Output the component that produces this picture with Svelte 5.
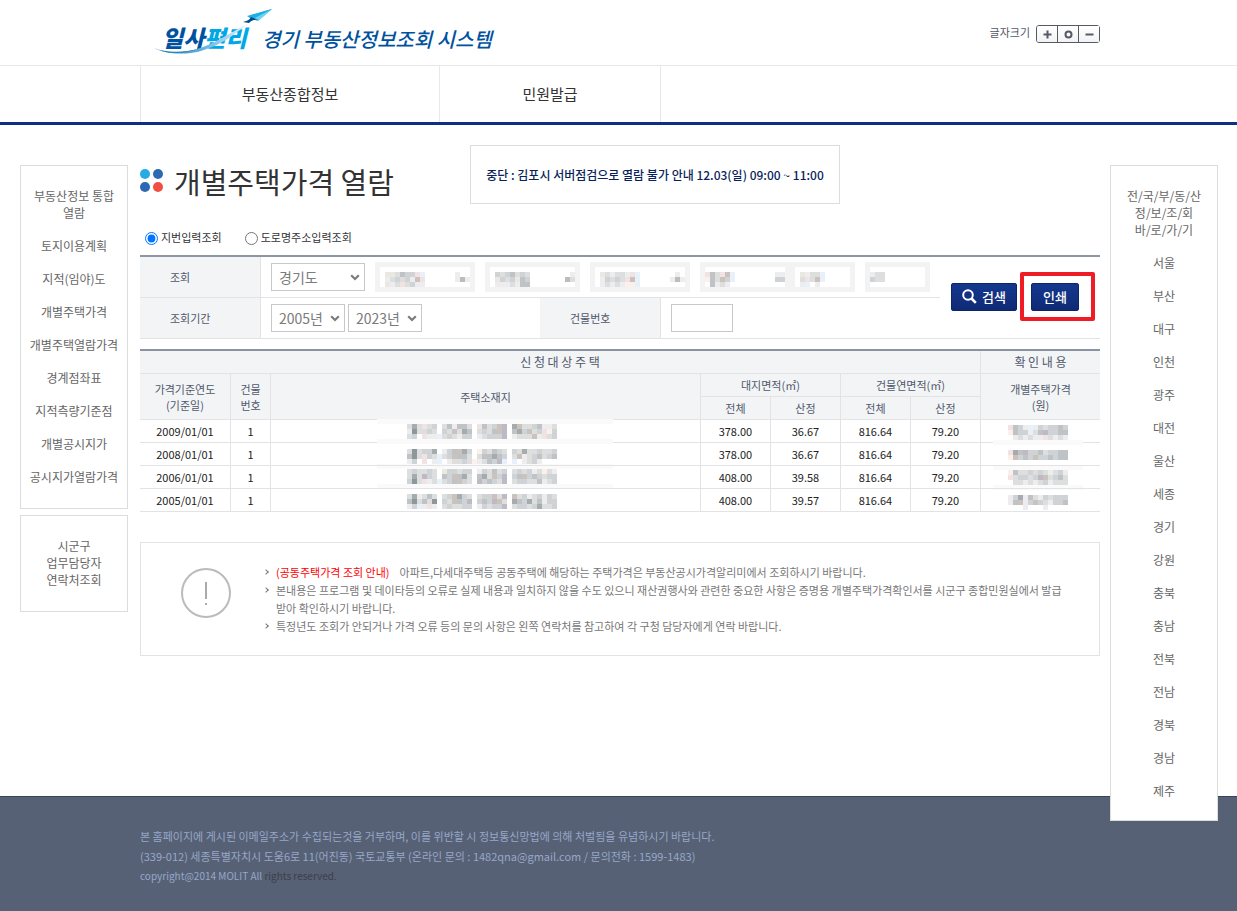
<script>
  const services = [
    '부동산정보 통합 열람', '토지이용계획', '지적(임야)도', '개별주택가격', '개별주택열람가격',
    '경계점좌표', '지적측량기준점', '개별공시지가', '공시지가열람가격'
  ];
  const regions = [
    '서울', '부산', '대구', '인천', '광주', '대전', '울산', '세종', '경기',
    '강원', '충북', '충남', '전북', '전남', '경북', '경남', '제주'
  ];
  const rows = [
    ['2009/01/01', '378.00', '36.67', '816.64', '79.20'],
    ['2008/01/01', '378.00', '36.67', '816.64', '79.20'],
    ['2006/01/01', '408.00', '39.58', '816.64', '79.20'],
    ['2005/01/01', '408.00', '39.57', '816.64', '79.20']
  ];

  // Masked values are drawn as 5px blocks; each letter is one block colour.
  const tones = {
    b: '#ededef', c: '#dddfdf', d: '#d0d3d6', e: '#bfc3c6', f: '#a6abae', g: '#8e979c',
    p: '#f1e3e4', w: '#cbc2be', s: '#e8f1f9', n: '#bdbac5', o: '#fbf1ea', y: '#ebe8e1', k: '#bcbcbc'
  };
  const blocks = (x, y, lines) =>
    lines.flatMap((line, r) =>
      [...line].map((t, c) => ({ x: x + c * 5, y: y + r * 5, fill: tones[t] })).filter((b) => b.fill)
    );

  const addressMask = [
    ...blocks(30, 5, ['cfcpcd.cebeec.pecdwn.fwccdebbc', 'bgccdc.dcwcfe.cdcewn.efdwcdpod', 'cd.pbbscdcbdd.bcdddn.bcccwbpcd']),
    ...blocks(30, 30, ['cgcddf.bdewfd.odcedc.dcfccdccd', 'egcpdcscdweec.ceefed.cwbcdecde', 'bd.p.bs.bccdcobcedns.s.bcdb...']),
    ...blocks(30, 50, ['cdccdc.yddcdd.bdcecd.cdcdbcocb', 'cfcndc.edwefc.efcwdn.dewdedcdd', 'dgcpbcscdewdc.ndedcn.cddccebcd']),
    ...blocks(30, 75, ['cfbcec.cdwfdc.cddwcn.wcdbcdbdc', 'egcecg.dcwedn.dednwc.fedfcebdd', 'bdsbpb.cdccdd.bdcddn.cddcdfccd'])
  ];
  const priceMask = [
    ...blocks(15, 5, ['pedbsbdcdded', 'oeddscenddee', '.bcbcbbpcbcb']),
    ...blocks(15, 30, ['pfenddecddee', 'owdedwddedee']),
    ...blocks(15, 50, ['oeccdcdcbcdb', 'pcddcdnwcdec', '.ccbcbcdbccc']),
    ...blocks(15, 75, ['bdfbecbdcddd', 'bewbdwdcbdde', '...b...b....'])
  ];
  const fieldMasks = [
    { name: '시군구', width: 100, cells: [...blocks(5, 5, ['yyceddps', 'bcdcdbwp', 'ybcpcdbb']), ...blocks(75, 5, ['b', 'bkb'])] },
    { name: '읍면동', width: 95, cells: [...blocks(5, 5, ['dcdecdc', 'ydcdyed', 'bbbcbee']), ...blocks(75, 5, ['.b', 'kcb'])] },
    { name: '리', width: 100, cells: [...blocks(5, 5, ['ycbccbps', 'bdcdcpws', 'bcbcboos']), ...blocks(75, 5, ['.b', 'bkb'])] }
  ];
  const lotMasks = [
    { name: '구분', width: 90, cells: [...blocks(0, 5, ['pecpws', 'oecwds', '.ebcb']), ...blocks(70, 5, ['bb', 'dd'])] },
    { name: '본번', width: 65, cells: blocks(5, 5, ['ybccs', 'cpcws', 'bs.b']) }
  ];
  const subMask = { name: '부번', width: 65, cells: blocks(0, 5, ['bcc', 'dcc']) };

  let mode = $state('jibun');
</script>

{#snippet mask(m)}
  <span class="mask" style:width="{m.width}px" role="img" aria-label={m.name}>
    <svg width={m.width - 10} height="20" shape-rendering="crispEdges">
      {#each m.cells as c}<rect x={c.x} y={c.y} width="5" height="5" fill={c.fill} />{/each}
    </svg>
  </span>
{/snippet}

{#snippet chevron()}
  <svg class="chevron" width="10" height="7" viewBox="0 0 10 7"><path d="M1.2 1.3 5 5 8.8 1.3" fill="none" stroke="#7b7b7b" stroke-width="2.2" /></svg>
{/snippet}

<header>
  <div class="top">
    <a class="logo" href="#home" aria-label="일사편리 경기 부동산정보조회 시스템">
      <svg width="350" height="50" viewBox="0 0 350 50">
        <defs>
          <linearGradient id="wing" x1="0" y1="1" x2="1" y2="0">
            <stop offset="0" stop-color="#7fdcf5" /><stop offset="1" stop-color="#0098d8" />
          </linearGradient>
          <linearGradient id="trail" x1="0" y1="0" x2="1" y2="0">
            <stop offset="0" stop-color="#2a7fc0" /><stop offset=".5" stop-color="#5fb0dd" /><stop offset="1" stop-color="#e4f6fd" />
          </linearGradient>
        </defs>
        <text x="9" y="39" class="brand"><tspan fill="#00529f">일사</tspan><tspan fill="#00a8e6">편리</tspan></text>
        <path d="M1 40C13 46 33 46 50 39 67 33 77 24 95 16 80 27 70 36 51 42 33 48 12 46 1 40Z" fill="url(#trail)" />
        <path d="M1 40C13 45 30 45 46 40.500 30 47 12 46 1 40Z" fill="#2a7fc0" />
        <path d="M98 7 119 1 105 13 98 11Z" fill="url(#wing)" />
        <path d="M119 1 94 8 100 12Z" fill="#1fb0e2" />
        <path d="M119 1 100 11 105 13Z" fill="#6fd4f2" />
        <path d="M90 14C95 13 97 11 98 9L106 12C101 11 98 13 96 15Z" fill="#00478f" />
        <text x="109" y="39" class="system" fill="#00529f">경기 부동산정보조회 시스템</text>
      </svg>
    </a>
    <div class="sizer">
      <span>글자크기</span>
      <div class="sizes">
        <button type="button" aria-label="크게"><svg width="9" height="9"><path d="M4.5 0.5v8M.5 4.5h8" stroke="#555a66" stroke-width="2" /></svg></button>
        <button type="button" aria-label="기본"><svg width="9" height="9"><circle cx="4.5" cy="4.5" r="3" fill="none" stroke="#555a66" stroke-width="2" /></svg></button>
        <button type="button" aria-label="작게"><svg width="9" height="9"><path d="M.5 4.5h8" stroke="#555a66" stroke-width="2" /></svg></button>
      </div>
    </div>
  </div>
  <nav>
    <a class="wide" href="#info">부동산종합정보</a>
    <a href="#issue">민원발급</a>
  </nav>
</header>

<div class="body">
  <aside class="left">
    <ul class="links">
      {#each services as s}<li><a href="#service">{s}</a></li>{/each}
    </ul>
    <ul class="links">
      <li><a href="#contact">시군구<br />업무담당자<br />연락처조회</a></li>
    </ul>
  </aside>

  <main>
    <h1>
      <svg width="24" height="24" viewBox="0 0 24 24">
        <circle cx="5" cy="5" r="5" fill="#27abe3" /><circle cx="18" cy="5" r="5" fill="#2d69b3" />
        <circle cx="5" cy="18" r="5" fill="#2d69b3" /><circle cx="18" cy="18" r="5" fill="#f04e43" />
      </svg>
      개별주택가격 열람
    </h1>
    <p class="notice">중단 : 김포시 서버점검으로 열람 불가 안내 12.03(일) 09:00 ~ 11:00</p>

    <div class="modes">
      <label><input type="radio" value="jibun" bind:group={mode} />지번입력조회</label>
      <label><input type="radio" value="road" bind:group={mode} />도로명주소입력조회</label>
    </div>

    <form class="search" onsubmit={(e) => e.preventDefault()}>
      <div class="fields">
        <div class="line">
          <label class="name" for="sido">조회</label>
          <div class="value address">
            <span class="pick province"><select id="sido"><option>경기도</option></select>{@render chevron()}</span>
            {#each fieldMasks as m}{@render mask(m)}{/each}
            <span class="lot">{#each lotMasks as m}{@render mask(m)}{/each}</span>
            {@render mask(subMask)}
          </div>
        </div>
        <div class="line split">
          <label class="name" for="from">조회기간</label>
          <div class="value years">
            <span class="pick"><select id="from"><option>2005년</option></select>{@render chevron()}</span>
            <span class="pick"><select aria-label="종료년도"><option>2023년</option></select>{@render chevron()}</span>
          </div>
          <label class="name" for="bldg">건물번호</label>
          <div class="value"><input id="bldg" type="text" /></div>
        </div>
      </div>
      <div class="actions">
        <button type="submit">
          <svg width="15" height="15" viewBox="0 0 15 15"><circle cx="6" cy="6" r="4.8" fill="none" stroke="#fff" stroke-width="2" /><path d="m9.5 9.5 4.3 4.3" stroke="#fff" stroke-width="2.6" /></svg>검색</button>
        <span class="marked"><button type="button">인쇄</button></span>
      </div>
    </form>

    <table>
      <colgroup>
        <col class="c90" /><col class="c40" /><col /><col class="c70" /><col class="c70" /><col class="c70" /><col class="c70" /><col class="c120" />
      </colgroup>
      <thead>
        <tr class="group"><th colspan="7">신 청 대 상 주 택</th><th>확 인 내 용</th></tr>
        <tr>
          <th rowspan="2">가격기준연도<br />(기준일)</th><th rowspan="2">건물<br />번호</th><th rowspan="2">주택소재지</th>
          <th colspan="2">대지면적(㎡)</th><th colspan="2">건물연면적(㎡)</th><th rowspan="2">개별주택가격<br />(원)</th>
        </tr>
        <tr><th class="inner">전체</th><th>산정</th><th>전체</th><th>산정</th></tr>
      </thead>
      <tbody>
        {#each rows as r, i}
          <tr>
            <td>{r[0]}</td><td>1</td>
            <td>
              {#if i === 0}
                <svg class="cover place" width="236" height="91" shape-rendering="crispEdges">
                  <rect width="236" height="91" fill="#fff" />
                  {#each [0, 20, 45, 65] as y}<rect {y} width="236" height="5" fill="#fafafa" />{/each}
                  {#each addressMask as c}<rect x={c.x} y={c.y} width="5" height="5" fill={c.fill} />{/each}
                </svg>
              {/if}
            </td>
            <td>{r[1]}</td><td>{r[2]}</td><td>{r[3]}</td><td>{r[4]}</td>
            <td>
              {#if i === 0}
                <svg class="cover price" width="90" height="91" shape-rendering="crispEdges">
                  <rect y="4" width="90" height="86" fill="#fff" />
                  {#each [20, 45, 65] as y}<rect {y} width="90" height="5" fill="#fafafa" />{/each}
                  {#each priceMask as c}<rect x={c.x} y={c.y} width="5" height="5" fill={c.fill} />{/each}
                </svg>
              {/if}
            </td>
          </tr>
        {/each}
      </tbody>
    </table>

    <section class="guide">
      <svg class="bang" width="50" height="50" viewBox="0 0 50 50">
        <circle cx="25" cy="25" r="24" fill="none" stroke="#bbb" stroke-width="2" />
        <path d="M25 14v17M25 35v2" stroke="#aaa" stroke-width="2" />
      </svg>
      <ul>
        <li><a class="hot" href="#apt">(공동주택가격 조회 안내)</a>아파트,다세대주택등 공동주택에 해당하는 주택가격은 부동산공시가격알리미에서 조회하시기 바랍니다.</li>
        <li>본내용은 프로그램 및 데이타등의 오류로 실제 내용과 일치하지 않을 수도 있으니 재산권행사와 관련한 중요한 사항은 증명용 개별주택가격확인서를 시군구 종합민원실에서 발급<br />받아 확인하시기 바랍니다.</li>
        <li>특정년도 조회가 안되거나 가격 오류 등의 문의 사항은 왼쪽 연락처를 참고하여 각 구청 담당자에게 연락 바랍니다.</li>
      </ul>
    </section>
  </main>

  <aside class="right">
    <ul class="links">
      <li>전/국/부/동/산<br />정/보/조/회<br />바/로/가/기</li>
      {#each regions as r}<li><a href="#region">{r}</a></li>{/each}
    </ul>
  </aside>
</div>

<footer>
  <p>본 홈페이지에 게시된 이메일주소가 수집되는것을 거부하며, 이를 위반할 시 정보통신망법에 의해 처벌됨을 유념하시기 바랍니다.</p>
  <p>(339-012) 세종특별자치시 도움6로 11(어진동) 국토교통부 (온라인 문의 : 1482qna@gmail.com / 문의전화 : 1599-1483)</p>
  <p class="copy">copyright@2014 MOLIT All <span>rights reserved.</span></p>
</footer>

<style>
  :global(body) {
    margin: 0;
    background: #fff;
    font: 11px/18px 'Noto Sans CJK KR', sans-serif;
    color: #333;
  }
  a { color: inherit; text-decoration: none; }
  ul, p, h1 { margin: 0; padding: 0; }
  ul { list-style: none; }
  svg { display: block; }
  button, input, select { font-family: inherit; box-sizing: border-box; }

  header { border-bottom: 3px solid #0e2f86; }
  .top {
    display: flex;
    justify-content: space-between;
    align-items: flex-start;
    padding: 0 137px 0 153px;
    border-bottom: 1px solid #e8e8ea;
    box-sizing: border-box;
    min-height: 66px;
  }
  .logo { padding-top: 8px; }
  .brand { font-size: 23px; font-weight: 900; font-style: italic; }
  .system { font-size: 20px; font-weight: 500; font-style: italic; }
  .sizer { display: flex; gap: 6px; padding-top: 23px; color: #555a66; }
  .sizes { display: flex; border: 1px solid #555a66; border-radius: 3px; height: 18px; margin-top: 2px; box-sizing: border-box; }
  .sizes button {
    width: 21px;
    padding: 0;
    display: grid;
    place-items: center;
    border: 0;
    background: linear-gradient(#fff, #f3f3f5);
    border-radius: 2px;
  }
  .sizes button:first-child { width: 20px; }
  .sizes button + button { border-left: 1px solid #555a66; border-radius: 0; }

  nav { display: flex; padding: 0 137px 0 140px; }
  nav a {
    flex: 0 0 221px;
    box-sizing: border-box;
    border-right: 1px solid #e8e8ea;
    text-align: center;
    font-size: 15px;
    line-height: 56px;
  }
  nav .wide { flex-basis: 300px; border-left: 1px solid #e8e8ea; }

  .body {
    display: grid;
    grid-template-columns: 108px minmax(0, 1fr) 108px;
    padding: 40px 19px 0 20px;
    align-items: start;
  }
  .left { display: grid; gap: 6px; }
  .links {
    display: grid;
    gap: 16px;
    padding: 21px 4px 23px;
    border: 1px solid #dcdcdc;
    background: #fff;
    text-align: center;
    font-size: 12px;
    line-height: 17px;
    color: #666;
    word-break: keep-all;
  }
  .right { position: relative; z-index: 1; margin-bottom: -25px; }
  .right .links { padding-bottom: 21px; }

  main { position: relative; margin: 0 10px 0 12px; }
  h1 {
    display: flex;
    align-items: center;
    gap: 10px;
    font-size: 29px;
    line-height: 32px;
    font-weight: 400;
    color: #333;
  }
  .notice {
    position: absolute;
    top: -20px;
    left: 330px;
    width: 368px;
    border: 1px solid #ddd;
    background: #fff;
    text-align: center;
    font-size: 12px;
    line-height: 57px;
    font-weight: 500;
    color: #0a1f5c;
  }
  .modes { display: flex; gap: 23px; padding: 30px 0 8px 5px; line-height: 20px; }
  .modes label { display: flex; align-items: center; gap: 3px; }
  .modes input { width: 13px; height: 13px; margin: 2px 0 0; }

  .search { display: flex; border-top: 2px solid #8c97a3; border-bottom: 1px solid #e3e3e5; }
  .fields { flex: 1; min-width: 0; }
  .line { display: grid; grid-template-columns: 120px 1fr; min-height: 40px; }
  .line.split { grid-template-columns: 120px 1fr 120px 1fr; border-top: 1px solid #e3e3e5; }
  .name { display: flex; align-items: center; padding-left: 30px; background: #f3f4f6; color: #4f586b; }
  .value { display: flex; align-items: center; padding-left: 10px; border-left: 1px solid #e3e3e5; }
  .address { gap: 10px; }
  .years { gap: 3px; }
  .lot { display: flex; }
  .pick { position: relative; width: 74px; }
  .province { width: 94px; }
  select, input[type='text'] {
    width: 100%;
    height: 28px;
    border: 1px solid #c8c8c8;
    border-radius: 0;
    background: #fff;
    color: #7b7b7b;
    font-size: 14px;
    padding: 0 0 0 7px;
    display: block;
    appearance: none;
  }
  input[type='text'] { width: 62px; }
  .chevron { position: absolute; right: 5px; top: 11px; pointer-events: none; }
  .mask { box-sizing: border-box; height: 30px; border: 5px solid #f3f3f3; }
  .actions { flex: 0 0 160px; display: flex; align-items: center; gap: 14px; padding: 0 0 2px 11px; box-sizing: border-box; }
  .actions button {
    display: flex;
    align-items: center;
    justify-content: center;
    gap: 5px;
    height: 28px;
    padding: 0 10px;
    border: 1px solid #0c2468;
    border-radius: 2px;
    background: linear-gradient(#14388f, #0f2a74);
    color: #fff;
    font-size: 13px;
    font-weight: 500;
    white-space: nowrap;
  }
  .marked { position: relative; }
  .marked button { min-width: 48px; }
  .marked::after {
    content: '';
    position: absolute;
    inset: -11px -16px -10px -11px;
    border: 4px solid #ee1c25;
    border-radius: 2px;
    pointer-events: none;
  }

  table {
    width: 100%;
    margin-top: 10px;
    table-layout: fixed;
    border-collapse: separate;
    border-spacing: 0;
    border-top: 2px solid #8b92a3;
    text-align: center;
  }
  .c90 { width: 90px; }
  .c40 { width: 40px; }
  .c70 { width: 70px; }
  .c120 { width: 120px; }
  th, td { height: 22px; padding: 0; border-bottom: 1px solid #e3e3e5; border-left: 1px solid #e3e3e5; }
  th { background: #f3f4f6; color: #4f586b; font-weight: 400; line-height: 16px; }
  .group th { font-size: 12px; }
  tr > :first-child:not(.inner) { border-left: 0; }
  td { position: relative; line-height: 18px; color: #222; }
  .cover { position: absolute; }
  .place { top: -1px; left: calc(50% - 108px); }
  .price { top: 0; left: calc(50% - 48px); }

  .guide { display: flex; align-items: flex-start; gap: 45px; margin-top: 30px; padding: 20px 0 20px 40px; border: 1px solid #e3e3e5; color: #777; }
  .bang { flex: none; margin-top: 5px; }
  .guide li { position: relative; }
  .guide li::before {
    content: '';
    position: absolute;
    left: -12px;
    top: 7px;
    width: 3px;
    height: 3px;
    border: solid #777;
    border-width: 1px 1px 0 0;
    transform: rotate(45deg);
  }
  .hot { margin-right: 10px; color: #f00; }

  footer { padding: 29px 140px 25px; border-top: 1px solid #38445c; background: #566175; color: #98a7c8; line-height: 20px; }
  .copy { font-size: 10px; }
  .copy span { color: #3b4048; }
</style>
